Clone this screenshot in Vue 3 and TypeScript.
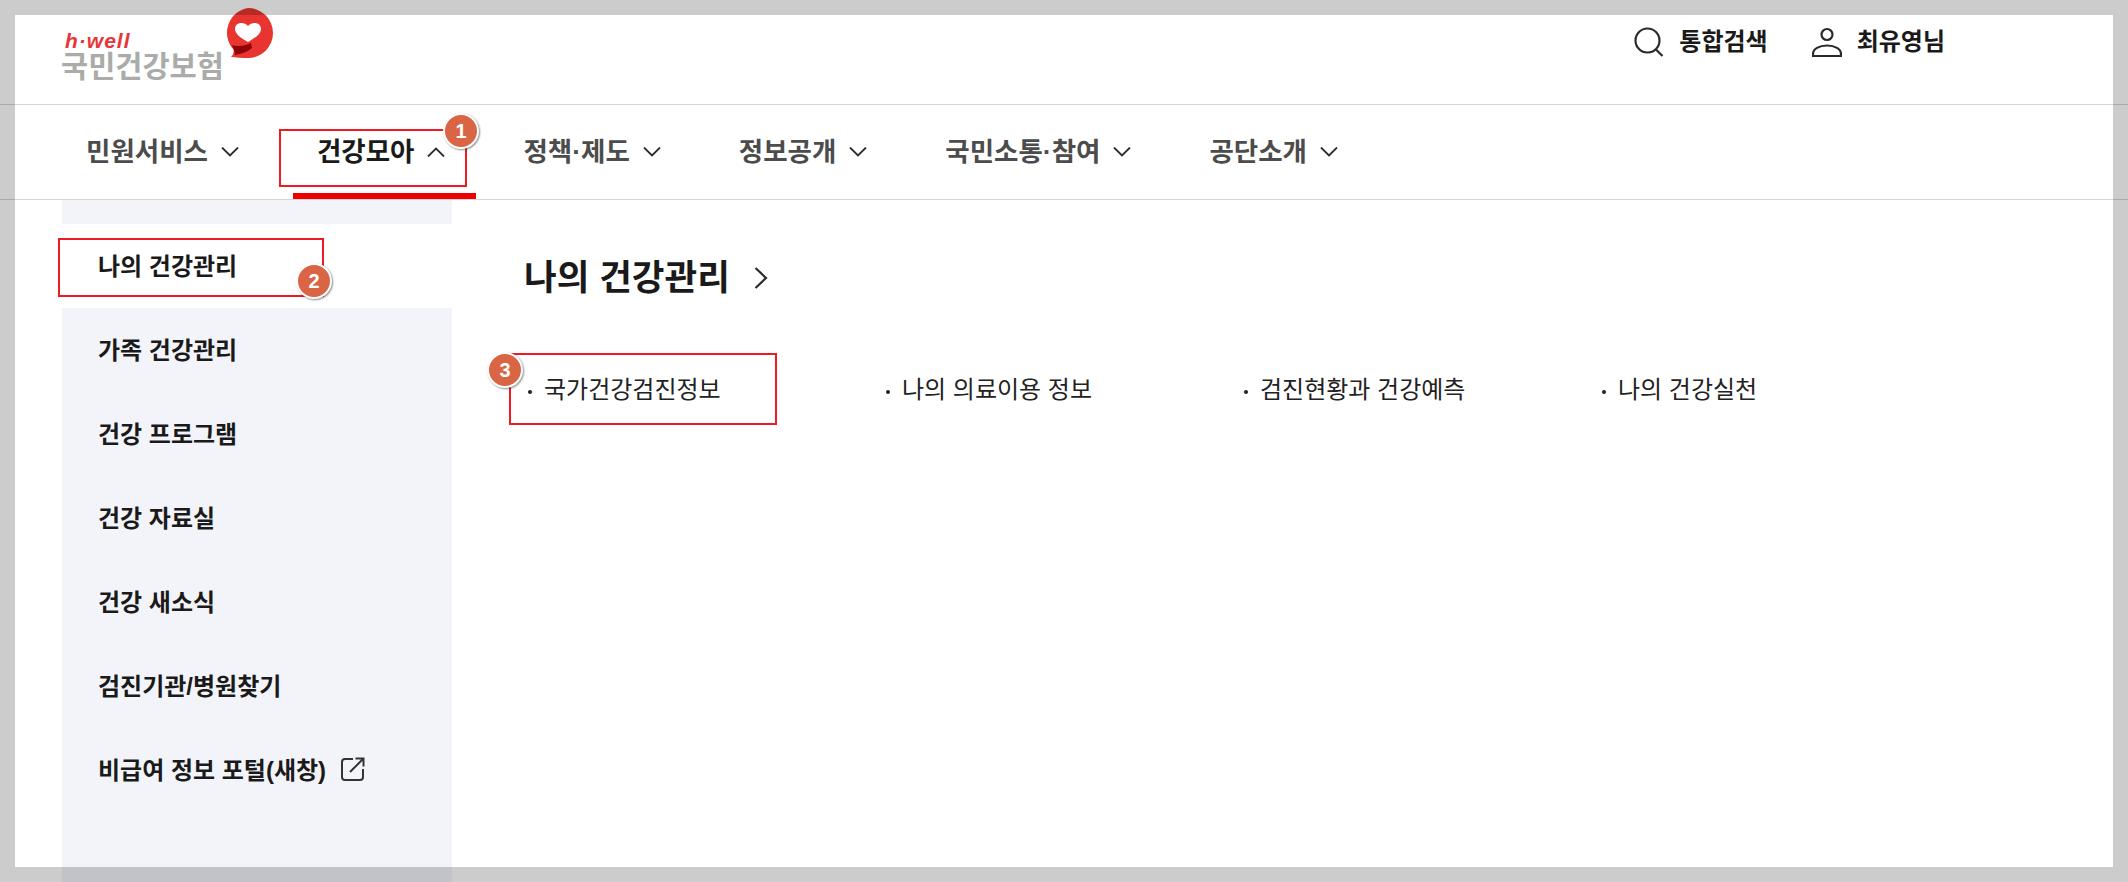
<script setup lang="ts">
const navItems = [
  { label: '민원서비스', active: false },
  { label: '건강모아', active: true },
  { label: '정책·제도', active: false },
  { label: '정보공개', active: false },
  { label: '국민소통·참여', active: false },
  { label: '공단소개', active: false },
]
const sideItems = ['나의 건강관리', '가족 건강관리', '건강 프로그램', '건강 자료실', '건강 새소식', '검진기관/병원찾기']
const links = ['국가건강검진정보', '나의 의료이용 정보', '검진현황과 건강예측', '나의 건강실천']
</script>

<template>
  <div class="page">
    <header class="top">
      <a class="logo">
        <span class="logo-en">h·well</span>
        <span class="logo-ko">국민건강보험</span>
        <svg class="logo-mark" viewBox="0 0 50 50" width="50" height="50" aria-hidden="true">
          <path d="M25 0a25 25 0 0 1 0 50c-6 0-12-.5-17-1 2-2 3-4 2.500-7.500A25 25 0 0 1 25 0z" fill="#e8352f" />
          <path d="M9 37c5 2 13 1 19-2l1 5c-5 4-11 6-17 7 0-4-2-7-3-10z" fill="#8f0508" />
          <path d="M25 34c-7-4-13-8-13-13 0-4 3-6 6.500-6 2.500 0 5 1 6.500 3 1.500-2 4-3 6.500-3 3.500 0 6.500 2 6.500 6 0 5-6 9-13 13z" fill="#fff" />
        </svg>
      </a>
      <div class="util">
        <a class="util-item search">
          <svg viewBox="0 0 30 30" width="30" height="30" fill="none" stroke="#2b2b2b" stroke-width="2.200" aria-hidden="true">
            <circle cx="13.500" cy="13.500" r="12" />
            <path d="M21.500 22l7 7" />
          </svg>
          <span>통합검색</span>
        </a>
        <a class="util-item user">
          <svg viewBox="0 0 30 30" width="30" height="30" fill="none" stroke="#2b2b2b" stroke-width="2.200" aria-hidden="true">
            <circle cx="15" cy="7.500" r="5.500" />
            <path d="M1 29v-2c0-5 6-8.500 14-8.500s14 3.500 14 8.500v2z" />
          </svg>
          <span>최유영님</span>
        </a>
      </div>
    </header>

    <nav class="gnb">
      <a v-for="item in navItems" :key="item.label" class="gnb-item" :class="{ on: item.active }">
        <span>{{ item.label }}</span>
        <svg viewBox="0 0 18 10" width="18" height="10" fill="none" stroke="#2b2b2b" stroke-width="1.800" aria-hidden="true">
          <path :d="item.active ? 'M1 9.500L9 1.500l8 8' : 'M1 .5l8 8 8-8'" />
        </svg>
      </a>
    </nav>

    <main class="body">
      <aside class="side">
        <a v-for="(label, i) in sideItems" :key="label" class="side-item" :class="{ on: i === 0 }">{{ label }}</a>
        <a class="side-item">
          <span>비급여 정보 포털(새창)</span>
          <svg class="ext" viewBox="0 0 24 24" width="24" height="24" fill="none" stroke="#333" stroke-width="2" aria-hidden="true">
            <path d="M12 2H4a3 3 0 0 0-3 3v15a3 3 0 0 0 3 3h15a3 3 0 0 0 3-3v-8" />
            <path d="M9 15L22.500 1.500M14.500 1.500h8v8" />
          </svg>
        </a>
      </aside>
      <section class="content">
        <h2 class="title">
          <span>나의 건강관리</span>
          <svg viewBox="0 0 14 22" width="14" height="22" fill="none" stroke="#2b2b2b" stroke-width="2.200" aria-hidden="true">
            <path d="M1.500 1l10.500 10L1.500 21" />
          </svg>
        </h2>
        <ul class="links">
          <li v-for="link in links" :key="link">{{ link }}</li>
        </ul>
      </section>
    </main>

    <div class="mark box1"></div>
    <div class="mark box2"></div>
    <div class="mark box3"></div>
    <span class="badge b1">1</span>
    <span class="badge b2">2</span>
    <span class="badge b3">3</span>
    <div class="frame"></div>
  </div>
</template>

<style>
html, body { margin: 0; background: #fff; }
</style>

<style scoped>
.page {
  position: relative;
  width: 2128px;
  height: 882px;
  overflow: hidden;
  background: #fff;
  color: #1a1a1a;
  font-family: "Liberation Sans", "Noto Sans CJK KR", sans-serif;
}
.top {
  height: 104px;
  display: flex;
  justify-content: space-between;
  border-bottom: 1px solid #d6d6d6;
  padding: 0 183px 0 61px;
}
.logo { position: relative; display: block; width: 213px; padding-top: 29px; }
.logo-en {
  display: block;
  height: 25px;
  padding-left: 4px;
  font: italic 700 21px/23px "Liberation Sans", sans-serif;
  letter-spacing: 1px;
  color: #e8353a;
}
.logo-ko {
  display: block;
  height: 26px;
  font-size: 29.500px;
  font-weight: 700;
  line-height: 26px;
  color: #a9aca8;
}
.logo-mark { position: absolute; left: 162px; top: 8px; }
.util { display: flex; gap: 44px; padding-top: 26px; height: 32px; }
.util-item { display: flex; align-items: center; gap: 15px; font-size: 24px; font-weight: 700; line-height: 30px; }
.gnb {
  height: 94px;
  display: flex;
  align-items: center;
  gap: 78px;
  padding-left: 86px;
  border-bottom: 1px solid #d6d6d6;
  box-sizing: content-box;
}
.gnb-item {
  position: relative;
  display: flex;
  align-items: center;
  gap: 13px;
  font-size: 26.500px;
  font-weight: 700;
  color: #4c4c4c;
  line-height: 40px;
}
.gnb-item.on { color: #1a1a1a; }
.gnb-item.on::after {
  content: "";
  position: absolute;
  left: -24px;
  right: -31px;
  top: 61px;
  height: 6px;
  background: #ee0000;
}
.body { display: flex; height: 682px; }
.side {
  width: 390px;
  margin-left: 62px;
  padding-top: 24px;
  background: #f3f4fa;
  flex: none;
}
.side-item {
  height: 84px;
  box-sizing: border-box;
  padding: 0 0 3px 36px;
  display: flex;
  align-items: center;
  font-size: 24px;
  font-weight: 700;
  color: #1a1a1a;
}
.side-item.on { background: #fff; }
.ext { margin-left: 15px; }
.content { flex: 1; padding: 48px 0 0 72px; }
.title {
  margin: 0;
  display: flex;
  align-items: center;
  gap: 24px;
  height: 60px;
  font-size: 35.500px;
  font-weight: 700;
  line-height: 60px;
}
.links {
  list-style: none;
  margin: 64px 0 0;
  padding: 0 0 0 4px;
  display: flex;
}
.links li {
  position: relative;
  width: 358px;
  padding-left: 16px;
  box-sizing: border-box;
  font-size: 24px;
  line-height: 36px;
  color: #222;
}
.links li::before {
  content: "";
  position: absolute;
  left: 0;
  top: 18px;
  width: 4px;
  height: 4px;
  border-radius: 50%;
  background: #222;
}
.mark { position: absolute; box-sizing: border-box; border: 2px solid #ed1c24; }
.box1 { left: 279px; top: 129px; width: 188px; height: 58px; }
.box2 { left: 58px; top: 238px; width: 266px; height: 59px; }
.box3 { left: 509px; top: 353px; width: 268px; height: 72px; }
.badge {
  position: absolute;
  width: 32px;
  height: 32px;
  border: 2px solid #fff;
  border-radius: 50%;
  background: #d96545;
  box-shadow: 1px 1px 2px rgba(0, 0, 0, .45);
  color: #fff;
  font: 700 20px/32px "Liberation Sans", sans-serif;
  text-align: center;
}
.b1 { left: 443px; top: 113px; }
.b2 { left: 296px; top: 263px; }
.b3 { left: 487px; top: 352px; }
.frame {
  position: absolute;
  inset: 0;
  border: 15px solid rgba(0, 0, 0, .2);
  pointer-events: none;
}
</style>
